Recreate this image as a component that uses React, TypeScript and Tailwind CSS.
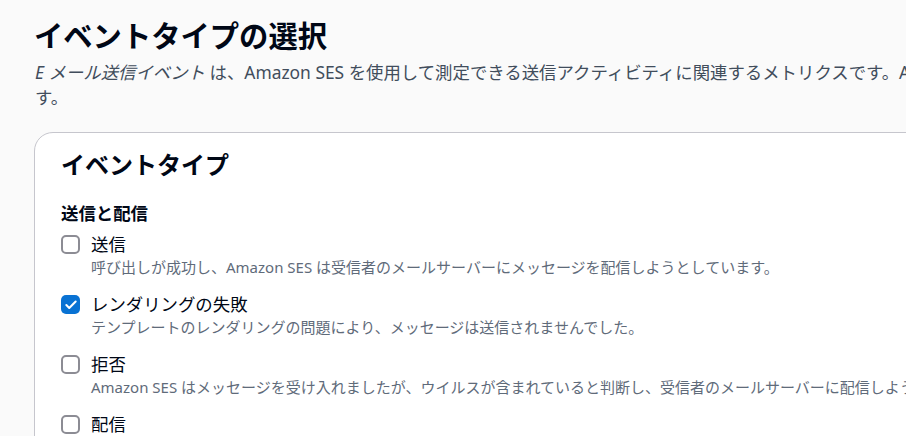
import { Check } from 'lucide-react'

const font = { fontFamily: '"Noto Sans", "Noto Sans CJK JP", sans-serif' }

type Option = {
	label: string
	description?: string
	checked?: boolean
}

const options: Option[] = [
	{
		label: '送信',
		description: '呼び出しが成功し、Amazon SES は受信者のメールサーバーにメッセージを配信しようとしています。',
	},
	{
		label: 'レンダリングの失敗',
		description: 'テンプレートのレンダリングの問題により、メッセージは送信されませんでした。',
		checked: true,
	},
	{
		label: '拒否',
		description:
			'Amazon SES はメッセージを受け入れましたが、ウイルスが含まれていると判断し、受信者のメールサーバーに配信しようとしませんでした。',
	},
	{
		label: '配信',
		description: 'Amazon SES は受信者のメールサーバーに E メールを正常に配信しました。',
	},
]

const Checkbox = ({ checked }: { checked?: boolean }) =>
	checked ? (
		<div className="w-[19px] h-[19px] rounded-[5px] bg-[#0972d3] flex items-center justify-center shrink-0">
			<Check size={14} strokeWidth={3.5} color="white" />
		</div>
	) : (
		<div className="w-[19px] h-[19px] rounded-[5px] border-2 border-[#8c8c94] bg-white shrink-0" />
	)

export default function App() {
	return (
		<div className="w-[906px] h-[436px] overflow-hidden bg-[#fafafa]" style={font}>
			<div className="pl-[35px] pt-[15px] w-[1400px]">
				{/* Page header */}
				<h1 className="text-[29.3px] leading-[42px] font-bold text-[#000716] -ml-[1px]">イベントタイプの選択</h1>
				<p className="text-[17.4px] leading-[25px] text-[#414d5c] whitespace-nowrap mt-[3px]">
					<i>E メール送信イベント</i> は、Amazon SES を使用して測定できる送信アクティビティに関連するメトリクスです。Amazon SES がパブリッシュするイベントタイプの詳細については、デベロッパーガイドを参照してくださいま
					<br />
					す。
				</p>

				{/* Event types card */}
				<div className="mt-[22px] -ml-[1px] bg-white border border-[#c6c6cd] rounded-[19px] pl-[26px] pt-[14px] pb-8">
					<h2 className="text-[24px] leading-[36px] font-bold text-[#000716]">イベントタイプ</h2>
					<div className="mt-[18px] text-[17.4px] leading-[24px] font-bold text-[#000716]">送信と配信</div>
					<div className="mt-[7px] flex flex-col gap-[14px]">
						{options.map(option => (
							<div key={option.label} className="flex gap-[11px]">
								<div className="pt-[3px]">
									<Checkbox checked={option.checked} />
								</div>
								<div className="flex flex-col">
									<div className="text-[17.4px] leading-[24px] text-[#000716] whitespace-nowrap">{option.label}</div>
									<div className="text-[15px] leading-[22px] text-[#5f6b7a] whitespace-nowrap">{option.description}</div>
								</div>
							</div>
						))}
					</div>
				</div>
			</div>
		</div>
	)
}
